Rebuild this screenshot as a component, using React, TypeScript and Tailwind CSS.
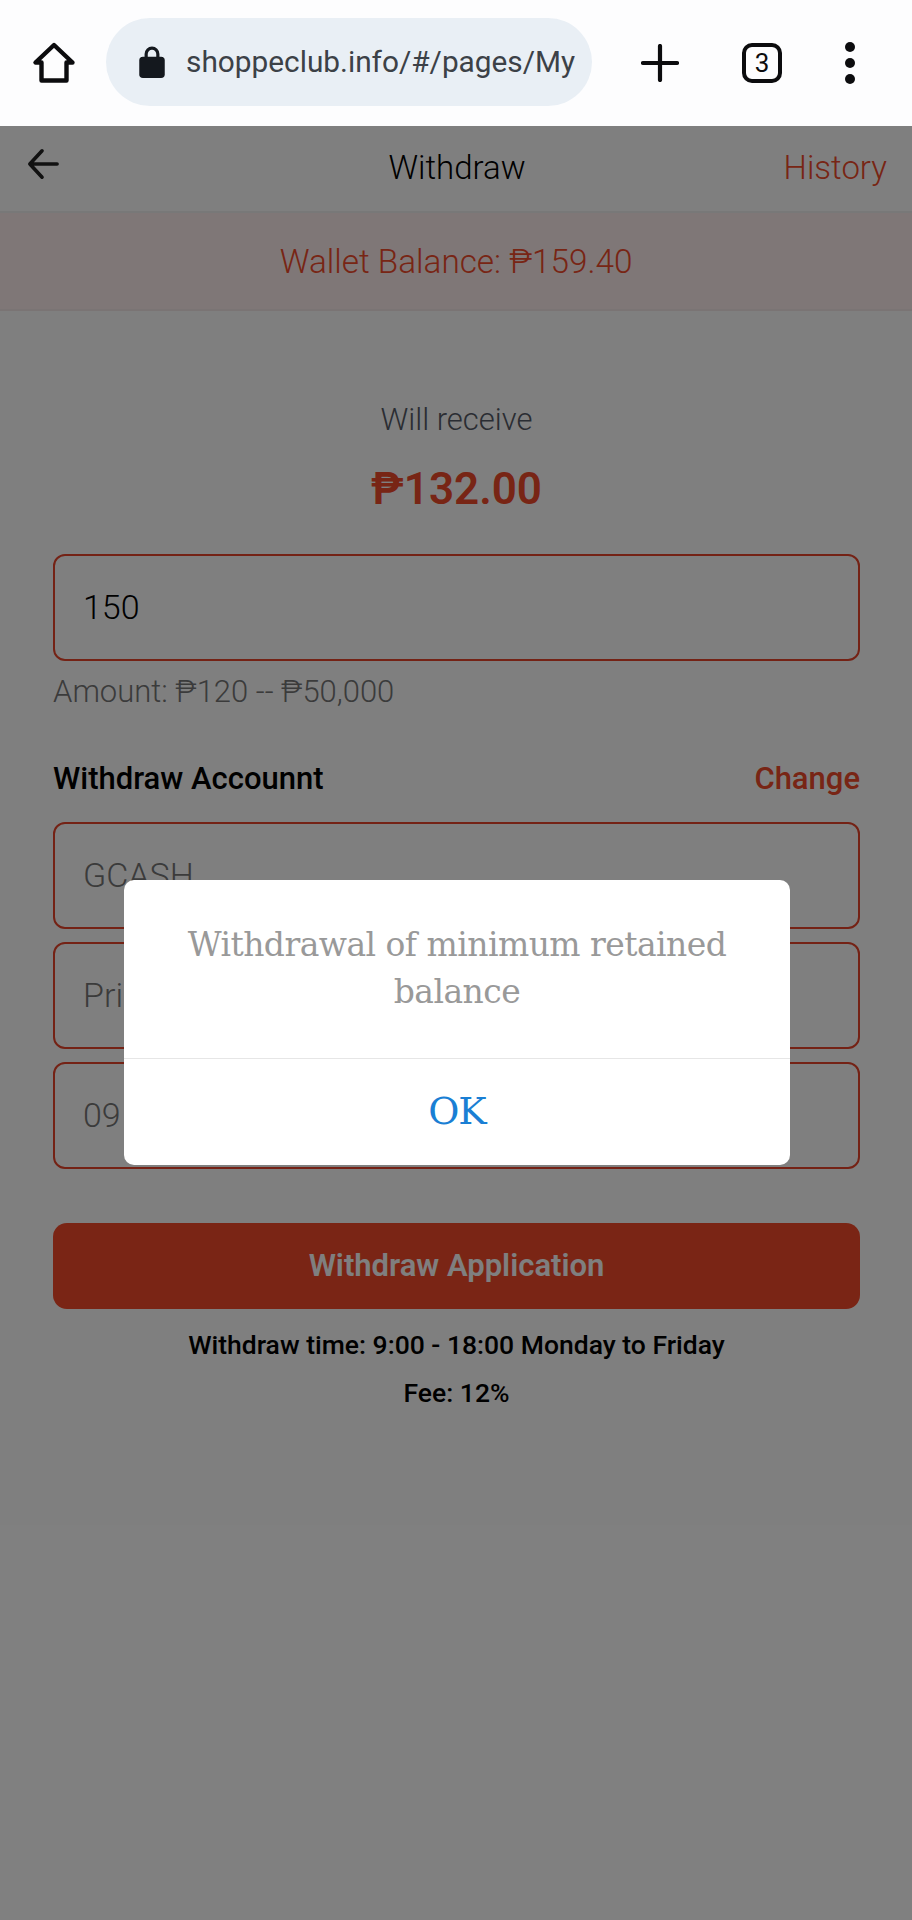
import React from "react";

const roboto = "font-['Roboto',sans-serif]";

const HomeIcon = () => (
  <svg width="44" height="44" viewBox="0 0 44 44" fill="none" stroke="#0c0c0e" strokeWidth="4.4" strokeLinejoin="round">
    <path d="M22 4 L3.5 21.5 H9.5 V39.5 H34.5 V21.5 H40.5 Z" />
  </svg>
);

const LockIcon = () => (
  <svg width="28" height="34" viewBox="0 0 26 32">
    <path d="M7.5 13 V8.5 a5.5 5.5 0 0 1 11 0 V13" fill="none" stroke="#14181e" strokeWidth="3" />
    <rect x="1" y="11" width="24" height="20" rx="3.5" fill="#14181e" />
  </svg>
);

const BrowserBar = () => (
  <div className="flex h-[126px] items-center bg-[#fdfdfe]">
    <div className="ml-[32px] flex w-[44px] shrink-0">
      <HomeIcon />
    </div>
    <div className="ml-[30px] flex h-[88px] w-[486px] -translate-y-[1px] items-center overflow-hidden rounded-[44px] bg-[#e9eff5] pl-[32px] pr-[16px]">
      <LockIcon />
      <span className={`ml-[20px] overflow-hidden whitespace-nowrap text-[29.8px] text-[#3c4147] ${roboto}`}>
        shoppeclub.info/#/pages/My
      </span>
    </div>
    <svg className="ml-[49px]" width="38" height="38" viewBox="0 0 38 38" stroke="#0c0c0e" strokeWidth="4.2" strokeLinecap="round">
      <path d="M19 2 V36 M2 19 H36" />
    </svg>
    <div className={`ml-[63px] flex h-[40px] w-[40px] items-center justify-center rounded-[10px] border-[4px] border-[#0c0c0e] text-[26px] text-[#0c0c0e] ${roboto}`}>
      3
    </div>
    <div className="ml-[63px] flex flex-col gap-[6px]">
      <span className="h-[10px] w-[10px] rounded-full bg-[#0c0c0e]" />
      <span className="h-[10px] w-[10px] rounded-full bg-[#0c0c0e]" />
      <span className="h-[10px] w-[10px] rounded-full bg-[#0c0c0e]" />
    </div>
  </div>
);

const Header = () => (
  <div className="grid h-[87px] grid-cols-3 items-center border-b-2 border-[#f0f0f0] pb-[2px] pl-[27px] pr-[25px]">
    <svg className="-mt-[8px]" width="32" height="32" viewBox="0 0 34 34" fill="none" stroke="#222" strokeWidth="3.8" strokeLinecap="round" strokeLinejoin="round">
      <path d="M16 3 L3 17 L16 31 M3 17 H32" />
    </svg>
    <span className="text-center text-[33px] font-light text-black">Withdraw</span>
    <span className="text-right text-[33px] font-light text-[#f04a2a]">History</span>
  </div>
);

const Field = ({ value, muted }: { value: string; muted?: boolean }) => (
  <div
    className={`flex h-[107px] items-center rounded-[12px] border-2 border-[#e8452a] pl-[28px] text-[34px] font-light ${
      muted ? "text-[#777]" : "text-black"
    }`}
  >
    {value}
  </div>
);

const AlertDialog = () => (
  <div className="absolute inset-x-0 bottom-0 top-[126px] flex items-center justify-center bg-black/50">
    <div className="-mt-[2px] ml-[2px] w-[666px] overflow-hidden rounded-[10px] bg-white">
      <div className="flex h-[179px] items-start justify-center border-b border-[#e6e6e6] px-[40px] pt-[41px] text-center font-['DejaVu_Serif',serif] text-[33px] leading-[47px] tracking-[-0.55px] text-[#999]">
        Withdrawal of minimum retained balance
      </div>
      <div className="flex h-[106px] items-center justify-center font-['DejaVu_Serif',serif] text-[38px] tracking-[-1px] text-[#1a7fd4]">
        OK
      </div>
    </div>
  </div>
);

export default function App() {
  return (
    <div className={`relative h-[1920px] w-[912px] overflow-hidden bg-white ${roboto}`}>
      <BrowserBar />
      <Header />
      <div className="flex h-[98px] items-center justify-center border-b-2 border-[#f4e8e8] bg-[#ffeeee] pt-[2px] text-[33.3px] font-light text-[#f04a2a]">
        Wallet Balance: ₱159.40
      </div>

      <div className="pl-[53px] pr-[52px]">
        <div className="mt-[87px] text-center text-[31px] font-light leading-[44px] text-[#555a66]">Will receive</div>
        <div className="mt-[21px] text-center text-[44px] font-semibold leading-[52px] text-[#f04a2a]">₱132.00</div>

        <div className="mt-[39px]">
          <Field value="150" />
        </div>
        <div className="mt-[11px] text-[31px] font-light leading-[40px] text-[#777]">Amount: ₱120 -- ₱50,000</div>

        <div className="mt-[47px] flex items-center justify-between text-[31px] font-medium leading-[40px]">
          <span className="text-black">Withdraw Accounnt</span>
          <span className="text-[#f04a2a]">Change</span>
        </div>

        <div className="mt-[23px] flex flex-col gap-[13px]">
          <Field value="GCASH" muted />
          <Field value="Primary" muted />
          <Field value="09" muted />
        </div>

        <button className="mt-[54px] flex h-[86px] w-full items-center justify-center rounded-[14px] bg-[#f44a2a] text-[31px] font-semibold text-white">
          Withdraw Application
        </button>

        <div className="mt-[16px] text-center text-[26.5px] font-medium leading-[40px] text-black">
          Withdraw time: 9:00 - 18:00 Monday to Friday
        </div>
        <div className="mt-[8px] text-center text-[26.5px] font-medium leading-[40px] text-black">Fee: 12%</div>
      </div>

      <AlertDialog />
    </div>
  );
}
